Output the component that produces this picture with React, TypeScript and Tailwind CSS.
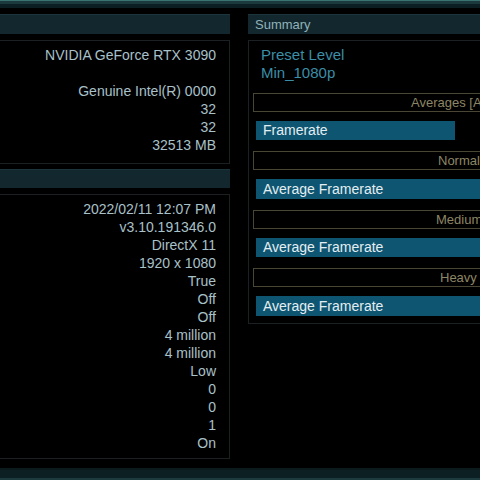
import React from "react";

const font = { fontFamily: '"Liberation Sans", Arial, sans-serif' };

const leftTop = [
  "NVIDIA GeForce RTX 3090",
  "",
  "Genuine Intel(R) 0000",
  "32",
  "32",
  "32513 MB",
];

const leftBottom = [
  "2022/02/11 12:07 PM",
  "v3.10.191346.0",
  "DirectX 11",
  "1920 x 1080",
  "True",
  "Off",
  "Off",
  "4 million",
  "4 million",
  "Low",
  "0",
  "0",
  "1",
  "On",
];

function Row({ text }: { text: string }) {
  return (
    <div className="h-[18px] flex items-center justify-end pr-[13px] text-[14px] text-[#a9c1c9] whitespace-nowrap">
      {text}
    </div>
  );
}

function LabelBox({ text, pl }: { text: string; pl: string }) {
  return (
    <div
      className={`ml-[4px] h-[19px] w-[300px] border border-[#4a4634] flex items-center text-[13px] text-[#8d8665] whitespace-nowrap ${pl}`}
    >
      {text}
    </div>
  );
}

function Bar({ text, w, h }: { text: string; w: string; h: string }) {
  return (
    <div
      className={`ml-[7px] mt-[9px] ${h} ${w} bg-[#0d5570] flex items-center pl-[7px] text-[14px] text-[#e4eef2] whitespace-nowrap`}
    >
      {text}
    </div>
  );
}

export default function App() {
  return (
    <div
      className="w-[480px] h-[480px] bg-black overflow-hidden flex flex-col"
      style={font}
    >
      <div className="h-[1px] bg-[#3b7373]" />
      <div className="h-[3px] bg-[#1a3a3d]" />
      <div className="h-[4px] bg-[#0b1f23]" />
      <div className="h-[6px]" />
      <div className="flex gap-[18px] items-start">
        {/* Left column */}
        <div className="w-[230px] flex flex-col">
          <div className="h-[20px] bg-[#13272e] border-t border-[#1c343b]" />
          <div className="mt-[6px] border-r border-b border-t border-[#1b2022] pt-[5px] pb-[9px]">
            {leftTop.map((t, i) => (
              <Row key={i} text={t} />
            ))}
          </div>
          <div className="mt-[5px] h-[19px] bg-[#13272e] border-t border-[#1c343b]" />
          <div className="mt-[6px] border-r border-b border-t border-[#1b2022] pt-[5px] pb-[6px]">
            {leftBottom.map((t, i) => (
              <Row key={i} text={t} />
            ))}
          </div>
        </div>
        {/* Right column */}
        <div className="flex-1 flex flex-col min-w-0">
          <div className="h-[20px] bg-[#13272e] border-t border-[#1c343b] flex items-center pl-[7px] text-[13px] text-[#8fb2ba]">
            Summary
          </div>
          <div className="mt-[6px] border-l border-t border-b border-[#1b2022] pt-[5px] pb-[7px] overflow-hidden">
            <div className="pl-[12px] text-[15px] text-[#3b8ea7] leading-[18px]">
              <div>Preset Level</div>
              <div>Min_1080p</div>
            </div>
            <div className="mt-[11px]">
              <LabelBox text="Averages [Avg FPS]" pl="pl-[157px]" />
            </div>
            <Bar text="Framerate" w="w-[199px]" h="h-[19px]" />
            <div className="mt-[11px]">
              <LabelBox text="Normal" pl="pl-[184px]" />
            </div>
            <Bar text="Average Framerate" w="w-[300px]" h="h-[20px]" />
            <div className="mt-[11px]">
              <LabelBox text="Medium" pl="pl-[182px]" />
            </div>
            <Bar text="Average Framerate" w="w-[300px]" h="h-[19px]" />
            <div className="mt-[11px]">
              <LabelBox text="Heavy" pl="pl-[186px]" />
            </div>
            <Bar text="Average Framerate" w="w-[300px]" h="h-[20px]" />
          </div>
        </div>
      </div>
      <div className="flex-1" />
      <div className="h-[2px] bg-[#0a1a1d]" />
      <div className="h-[8px] bg-[#0c2024]" />
      <div className="h-[2px] bg-[#1d3b3f]" />
    </div>
  );
}
